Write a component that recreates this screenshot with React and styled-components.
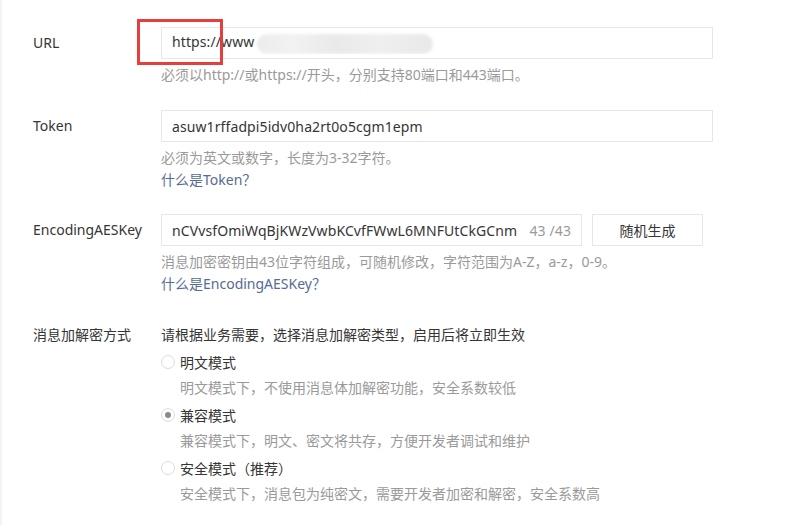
import React from 'react'
import styled, { createGlobalStyle } from 'styled-components'

const GlobalStyle = createGlobalStyle`
  html, body {
    margin: 0;
    background: #fff;
  }
  body {
    font-family: "Noto Sans", "Noto Sans CJK SC", sans-serif;
    font-size: 14px;
    color: #353535;
  }
`

const Page = styled.div`
  min-height: 525px;
  box-sizing: border-box;
  border-left: 2px solid #f3f3f3;
  padding: 27px 0 0 31px;
`

const Row = styled.div`
  display: grid;
  grid-template-columns: 128px 1fr;
  margin-bottom: ${p => p.gap || 24}px;
`

const Label = styled.div`
  line-height: ${p => p.lh || 32}px;
  color: #353535;
  white-space: nowrap;
`

const Field = styled.div`
  display: flex;
  flex-direction: column;
  align-items: flex-start;
`

const InputLine = styled.div`
  display: flex;
  gap: 10px;
`

const InputBox = styled.div`
  position: relative;
  box-sizing: border-box;
  width: ${p => p.width || 552}px;
  height: 32px;
  border: 1px solid #e7e7e7;
  padding: 0 10px;
  display: flex;
  align-items: center;
  color: #353535;
  white-space: nowrap;
  letter-spacing: 0.1px;
`

const Value = styled.span`
  flex: 1;
  overflow: hidden;
`

const Counter = styled.span`
  color: #9a9a9a;
  margin-left: 6px;
`

const Blurred = styled.span`
  display: inline-block;
  vertical-align: middle;
  width: 176px;
  height: 20px;
  margin-left: 3px;
  border-radius: 10px;
  background: linear-gradient(90deg, #ececec 0%, #f2f2f2 20%, #e9e9e9 45%, #efefef 70%, #e8e8e8 100%);
  filter: blur(1.5px);
`

const Highlight = styled.div`
  position: absolute;
  left: -25px;
  top: -9px;
  width: 86px;
  height: 46px;
  box-sizing: border-box;
  border: 3px solid #e63e3d;
  pointer-events: none;
`

const Button = styled.button`
  box-sizing: border-box;
  width: 111px;
  height: 32px;
  border: 1px solid #e4e8eb;
  background: #fff;
  color: #353535;
  font: inherit;
  padding: 0;
`

const Hint = styled.div`
  margin-top: ${p => p.mt ?? 5}px;
  line-height: 22px;
  color: #9a9a9a;
`

const Link = styled.a`
  line-height: 21px;
  color: #576b95;
  text-decoration: none;
`

const Desc = styled.div`
  line-height: 26px;
  color: #353535;
`

const RadioLine = styled.label`
  display: flex;
  align-items: center;
  height: 27px;
  color: #353535;
`

const RadioDot = styled.span`
  box-sizing: border-box;
  width: 14px;
  height: 14px;
  border-radius: 50%;
  border: 1px solid #dcdcdc;
  margin: 0 5px 0 0;
  display: flex;
  align-items: center;
  justify-content: center;
  background: #fff;
  &::after {
    content: '';
    width: 6px;
    height: 6px;
    border-radius: 50%;
    background: ${p => (p.checked ? '#8a8a8a' : 'transparent')};
  }
`

const RadioDesc = styled.div`
  padding-left: 19px;
  line-height: 26px;
  color: #9a9a9a;
`

const modes = [
  { name: '明文模式', desc: '明文模式下，不使用消息体加解密功能，安全系数较低' },
  { name: '兼容模式', desc: '兼容模式下，明文、密文将共存，方便开发者调试和维护', checked: true },
  { name: '安全模式（推荐）', desc: '安全模式下，消息包为纯密文，需要开发者加密和解密，安全系数高' },
]

export default function App() {
  return (
    <Page>
      <GlobalStyle />
      <Row>
        <Label>URL</Label>
        <Field>
          <InputBox>
            <Value>
              https://www<Blurred />
            </Value>
            <Highlight />
          </InputBox>
          <Hint>必须以http://或https://开头，分别支持80端口和443端口。</Hint>
        </Field>
      </Row>
      <Row>
        <Label>Token</Label>
        <Field>
          <InputBox>
            <Value>asuw1rffadpi5idv0ha2rt0o5cgm1epm</Value>
          </InputBox>
          <Hint>必须为英文或数字，长度为3-32字符。</Hint>
          <Link href="#">什么是Token？</Link>
        </Field>
      </Row>
      <Row gap={28}>
        <Label>EncodingAESKey</Label>
        <Field>
          <InputLine>
            <InputBox width={421}>
              <Value>nCVvsfOmiWqBjKWzVwbKCvfFWwL6MNFUtCkGCnm</Value>
              <Counter>43 /43</Counter>
            </InputBox>
            <Button>随机生成</Button>
          </InputLine>
          <Hint>消息加密密钥由43位字符组成，可随机修改，字符范围为A-Z，a-z，0-9。</Hint>
          <Link href="#">什么是EncodingAESKey？</Link>
        </Field>
      </Row>
      <Row>
        <Label lh={26}>消息加解密方式</Label>
        <Field>
          <Desc>请根据业务需要，选择消息加解密类型，启用后将立即生效</Desc>
          {modes.map(m => (
            <div key={m.name}>
              <RadioLine>
                <RadioDot checked={m.checked} />
                {m.name}
              </RadioLine>
              <RadioDesc>{m.desc}</RadioDesc>
            </div>
          ))}
        </Field>
      </Row>
    </Page>
  )
}
